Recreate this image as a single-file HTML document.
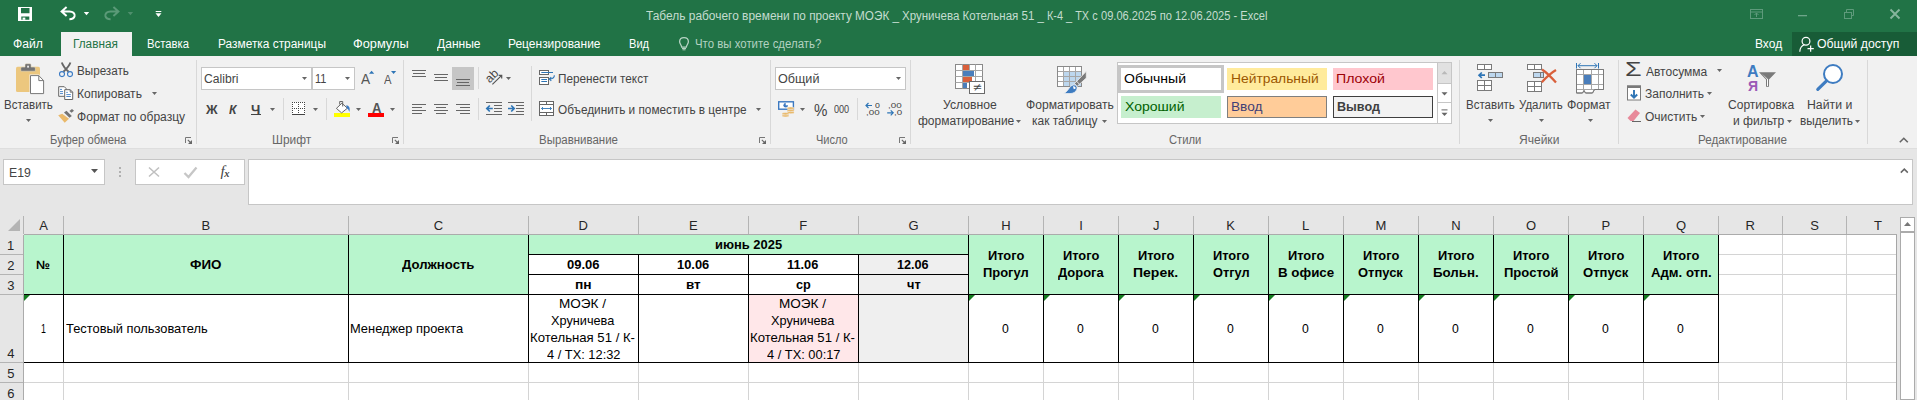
<!DOCTYPE html><html lang="ru"><head><meta charset="utf-8"><title>Excel</title><style>

html,body{margin:0;padding:0;}
body{width:1917px;height:400px;overflow:hidden;position:relative;background:#e6e6e6;font-family:"Liberation Sans",sans-serif;}
.b{position:absolute;box-sizing:border-box;display:block;}
.t{position:absolute;white-space:nowrap;transform-origin:0 50%;display:block;}

</style></head><body>
<div class="b" style="left:0px;top:0px;width:1917px;height:56px;background:#217346;"></div>
<div class="b" style="left:0px;top:56px;width:1917px;height:92px;background:#f1f1f1;"></div>
<div class="b" style="left:0px;top:148px;width:1917px;height:1px;background:#dedede;"></div>
<div class="b" style="left:61px;top:32px;width:71px;height:24px;background:#f1f1f1;"></div>
<div class="b" style="left:1792px;top:32px;width:125px;height:24px;background:#185c37;"></div>
<span class="t" id="t0" style="left:646.45px;top:10.00px;font-size:12px;line-height:12px;color:#c4dccf;transform:scaleX(0.9933);">Табель рабочего времени</span>
<span class="t" id="t1" style="left:793.12px;top:10.00px;font-size:12px;line-height:12px;color:#c4dccf;transform:scaleX(0.9786);">по проекту МОЭК _</span>
<span class="t" id="t2" style="left:902.16px;top:10.00px;font-size:12px;line-height:12px;color:#c4dccf;transform:scaleX(0.9604);">Хруничева Котельная 51 _</span>
<span class="t" id="t3" style="left:1046.84px;top:10.00px;font-size:12px;line-height:12px;color:#c4dccf;transform:scaleX(0.9096);">К-4 _ ТХ с</span>
<span class="t" id="t4" style="left:1100.68px;top:10.00px;font-size:12px;line-height:12px;color:#c4dccf;transform:scaleX(0.9248);">09.06.2025 по 12.06.2025 - Excel</span>
<span class="t" id="t5" style="left:12.62px;top:38.00px;font-size:12.5px;line-height:12.5px;color:#fff;transform:scaleX(0.9730);">Файл</span>
<span class="t" id="t6" style="left:73.36px;top:38.00px;font-size:12.5px;line-height:12.5px;color:#217346;transform:scaleX(0.9419);">Главная</span>
<span class="t" id="t7" style="left:146.70px;top:38.00px;font-size:12.5px;line-height:12.5px;color:#fff;transform:scaleX(0.9031);">Вставка</span>
<span class="t" id="t8" style="left:217.55px;top:38.00px;font-size:12.5px;line-height:12.5px;color:#fff;transform:scaleX(0.9519);">Разметка страницы</span>
<span class="t" id="t9" style="left:353.28px;top:38.00px;font-size:12.5px;line-height:12.5px;color:#fff;transform:scaleX(1.0216);">Формулы</span>
<span class="t" id="t10" style="left:436.95px;top:38.00px;font-size:12.5px;line-height:12.5px;color:#fff;transform:scaleX(0.9650);">Данные</span>
<span class="t" id="t11" style="left:508.04px;top:38.00px;font-size:12.5px;line-height:12.5px;color:#fff;transform:scaleX(0.9582);">Рецензирование</span>
<span class="t" id="t12" style="left:628.91px;top:38.00px;font-size:12.5px;line-height:12.5px;color:#fff;transform:scaleX(0.8870);">Вид</span>
<span class="t" id="t13" style="left:695.33px;top:38.00px;font-size:12.5px;line-height:12.5px;color:#b3d2c1;transform:scaleX(0.9139);">Что вы хотите сделать?</span>
<span class="t" id="t14" style="left:1755.04px;top:38.00px;font-size:12.5px;line-height:12.5px;color:#fff;transform:scaleX(0.9600);">Вход</span>
<span class="t" id="t15" style="left:1817.46px;top:38.00px;font-size:12.5px;line-height:12.5px;color:#fff;transform:scaleX(0.9804);">Общий доступ</span>
<div class="b" style="left:196px;top:60px;width:1px;height:84px;background:#d8d8d8;"></div>
<div class="b" style="left:403px;top:60px;width:1px;height:84px;background:#d8d8d8;"></div>
<div class="b" style="left:770px;top:60px;width:1px;height:84px;background:#d8d8d8;"></div>
<div class="b" style="left:910px;top:60px;width:1px;height:84px;background:#d8d8d8;"></div>
<div class="b" style="left:1459px;top:60px;width:1px;height:84px;background:#d8d8d8;"></div>
<div class="b" style="left:1618px;top:60px;width:1px;height:84px;background:#d8d8d8;"></div>
<div class="b" style="left:1867px;top:60px;width:1px;height:84px;background:#d8d8d8;"></div>
<div class="b" style="left:283px;top:98px;width:1px;height:22px;background:#d8d8d8;"></div>
<div class="b" style="left:326px;top:98px;width:1px;height:22px;background:#d8d8d8;"></div>
<div class="b" style="left:478px;top:98px;width:1px;height:22px;background:#d8d8d8;"></div>
<div class="b" style="left:857px;top:98px;width:1px;height:22px;background:#d8d8d8;"></div>
<div class="b" style="left:478px;top:67px;width:1px;height:22px;background:#d8d8d8;"></div>
<div class="b" style="left:531px;top:66px;width:1px;height:55px;background:#d8d8d8;"></div>
<span class="t" id="t16" style="left:50.11px;top:134.00px;font-size:12px;line-height:12px;color:#666;transform:scaleX(0.9365);">Буфер обмена</span>
<span class="t" id="t17" style="left:272.06px;top:134.00px;font-size:12px;line-height:12px;color:#666;transform:scaleX(0.9913);">Шрифт</span>
<span class="t" id="t18" style="left:538.59px;top:134.00px;font-size:12px;line-height:12px;color:#666;transform:scaleX(0.9553);">Выравнивание</span>
<span class="t" id="t19" style="left:816.17px;top:134.00px;font-size:12px;line-height:12px;color:#666;transform:scaleX(0.9204);">Число</span>
<span class="t" id="t20" style="left:1168.94px;top:134.00px;font-size:12px;line-height:12px;color:#666;transform:scaleX(0.9347);">Стили</span>
<span class="t" id="t21" style="left:1518.95px;top:134.00px;font-size:12px;line-height:12px;color:#666;transform:scaleX(1.0027);">Ячейки</span>
<span class="t" id="t22" style="left:1698.08px;top:134.00px;font-size:12px;line-height:12px;color:#666;transform:scaleX(0.9729);">Редактирование</span>
<span class="t" id="t23" style="left:3.59px;top:99.00px;font-size:12px;line-height:12px;color:#444;transform:scaleX(0.9603);">Вставить</span>
<svg class="b" style="left:26px;top:119px;" width="5" height="3" viewBox="0 0 5 3"><path d="M0 0H5L2.5 3Z" fill="#666"/></svg>
<span class="t" id="t24" style="left:76.58px;top:65.00px;font-size:12px;line-height:12px;color:#444;transform:scaleX(0.9717);">Вырезать</span>
<span class="t" id="t25" style="left:76.55px;top:88.00px;font-size:12px;line-height:12px;color:#444;transform:scaleX(1.0046);">Копировать</span>
<svg class="b" style="left:152px;top:92px;" width="5" height="3" viewBox="0 0 5 3"><path d="M0 0H5L2.5 3Z" fill="#666"/></svg>
<span class="t" id="t26" style="left:76.85px;top:111.00px;font-size:12px;line-height:12px;color:#444;transform:scaleX(1.0051);">Формат по образцу</span>
<div class="b" style="left:201px;top:67px;width:111px;height:23px;background:#fff;border:1px solid #c6c6c6;"></div>
<div class="b" style="left:312px;top:67px;width:43px;height:23px;background:#fff;border:1px solid #c6c6c6;"></div>
<span class="t" id="t27" style="left:203.89px;top:73.00px;font-size:12px;line-height:12px;color:#444;transform:scaleX(1.0110);">Calibri</span>
<svg class="b" style="left:302px;top:77px;" width="5" height="3" viewBox="0 0 5 3"><path d="M0 0H5L2.5 3Z" fill="#666"/></svg>
<span class="t" id="t28" style="left:315.18px;top:73.00px;font-size:12px;line-height:12px;color:#444;transform:scaleX(0.9105);">11</span>
<svg class="b" style="left:345px;top:77px;" width="5" height="3" viewBox="0 0 5 3"><path d="M0 0H5L2.5 3Z" fill="#666"/></svg>
<span class="t" id="t29" style="left:206.20px;top:103.00px;font-size:13px;line-height:13px;color:#444;font-weight:700;transform:scaleX(0.9846);">Ж</span>
<span class="t" id="t30" style="left:229.31px;top:103.00px;font-size:13px;line-height:13px;color:#444;font-weight:700;font-style:italic;transform:scaleX(0.9377);">К</span>
<span class="t" id="t31" style="left:251.13px;top:103.00px;font-size:13px;line-height:13px;color:#444;font-weight:700;transform:scaleX(1.0170);">Ч</span>
<div class="b" style="left:251px;top:114px;width:10px;height:1px;background:#444;"></div>
<svg class="b" style="left:270px;top:108px;" width="5" height="3" viewBox="0 0 5 3"><path d="M0 0H5L2.5 3Z" fill="#666"/></svg>
<svg class="b" style="left:313px;top:108px;" width="5" height="3" viewBox="0 0 5 3"><path d="M0 0H5L2.5 3Z" fill="#666"/></svg>
<svg class="b" style="left:356px;top:108px;" width="5" height="3" viewBox="0 0 5 3"><path d="M0 0H5L2.5 3Z" fill="#666"/></svg>
<svg class="b" style="left:390px;top:108px;" width="5" height="3" viewBox="0 0 5 3"><path d="M0 0H5L2.5 3Z" fill="#666"/></svg>
<div class="b" style="left:452px;top:67px;width:22px;height:23px;background:#c6c6c6;"></div>
<span class="t" id="t32" style="left:557.82px;top:73.00px;font-size:12px;line-height:12px;color:#444;transform:scaleX(0.9781);">Перенести текст</span>
<span class="t" id="t33" style="left:558.21px;top:104.00px;font-size:12px;line-height:12px;color:#444;transform:scaleX(0.9829);">Объединить и поместить в центре</span>
<svg class="b" style="left:756px;top:108px;" width="5" height="3" viewBox="0 0 5 3"><path d="M0 0H5L2.5 3Z" fill="#666"/></svg>
<svg class="b" style="left:506px;top:77px;" width="5" height="3" viewBox="0 0 5 3"><path d="M0 0H5L2.5 3Z" fill="#666"/></svg>
<div class="b" style="left:775px;top:67px;width:131px;height:23px;background:#fff;border:1px solid #c6c6c6;"></div>
<span class="t" id="t34" style="left:778.42px;top:73.00px;font-size:12px;line-height:12px;color:#444;transform:scaleX(1.0490);">Общий</span>
<svg class="b" style="left:896px;top:77px;" width="5" height="3" viewBox="0 0 5 3"><path d="M0 0H5L2.5 3Z" fill="#666"/></svg>
<svg class="b" style="left:800px;top:108px;" width="5" height="3" viewBox="0 0 5 3"><path d="M0 0H5L2.5 3Z" fill="#666"/></svg>
<span class="t" id="t35" style="left:814.03px;top:103.00px;font-size:16px;line-height:16px;color:#444;transform:scaleX(0.9434);">%</span>
<span class="t" id="t36" style="left:834.18px;top:105.00px;font-size:10px;line-height:10px;color:#444;transform:scaleX(0.9078);">000</span>
<span class="t" id="t37" style="left:942.95px;top:99.00px;font-size:12px;line-height:12px;color:#444;transform:scaleX(1.0162);">Условное</span>
<span class="t" id="t38" style="left:917.50px;top:115.00px;font-size:12px;line-height:12px;color:#444;transform:scaleX(0.9992);">форматирование</span>
<svg class="b" style="left:1016px;top:120px;" width="5" height="3" viewBox="0 0 5 3"><path d="M0 0H5L2.5 3Z" fill="#666"/></svg>
<span class="t" id="t39" style="left:1025.59px;top:99.00px;font-size:12px;line-height:12px;color:#444;transform:scaleX(1.0090);">Форматировать</span>
<span class="t" id="t40" style="left:1032.45px;top:115.00px;font-size:12px;line-height:12px;color:#444;transform:scaleX(0.9974);">как таблицу</span>
<svg class="b" style="left:1102px;top:120px;" width="5" height="3" viewBox="0 0 5 3"><path d="M0 0H5L2.5 3Z" fill="#666"/></svg>
<div class="b" style="left:1117px;top:62px;width:335px;height:62px;background:#fff;border:1px solid #c6c6c6;"></div>
<div class="b" style="left:1118px;top:65px;width:106px;height:28px;background:#fff;border:3px solid #c6c6c6;"></div>
<div class="b" style="left:1227px;top:68px;width:100px;height:22px;background:#ffeb9c;"></div>
<div class="b" style="left:1333px;top:68px;width:100px;height:22px;background:#ffc7ce;"></div>
<div class="b" style="left:1121px;top:96px;width:100px;height:22px;background:#c6efce;"></div>
<div class="b" style="left:1227px;top:96px;width:100px;height:22px;background:#ffcc99;border:1px solid #7f7f7f;"></div>
<div class="b" style="left:1333px;top:96px;width:100px;height:22px;background:#f2f2f2;border:1px solid #3f3f3f;"></div>
<span class="t" id="t41" style="left:1124.34px;top:72.00px;font-size:13px;line-height:13px;color:#000;transform:scaleX(1.0787);">Обычный</span>
<span class="t" id="t42" style="left:1230.67px;top:72.00px;font-size:13px;line-height:13px;color:#9c5700;transform:scaleX(1.0631);">Нейтральный</span>
<span class="t" id="t43" style="left:1336.40px;top:72.00px;font-size:13px;line-height:13px;color:#9c0006;transform:scaleX(1.0873);">Плохой</span>
<span class="t" id="t44" style="left:1124.78px;top:100.00px;font-size:13px;line-height:13px;color:#006100;transform:scaleX(1.0793);">Хороший</span>
<span class="t" id="t45" style="left:1230.69px;top:100.00px;font-size:13px;line-height:13px;color:#3f3f76;transform:scaleX(1.0476);">Ввод</span>
<span class="t" id="t46" style="left:1336.71px;top:100.00px;font-size:13px;line-height:13px;color:#3f3f3f;font-weight:700;transform:scaleX(0.9679);">Вывод</span>
<div class="b" style="left:1437px;top:62px;width:15px;height:22px;background:#e1e1e1;border:1px solid #c6c6c6;"></div>
<div class="b" style="left:1437px;top:83px;width:15px;height:20px;background:#fff;border:1px solid #c6c6c6;"></div>
<div class="b" style="left:1437px;top:102px;width:15px;height:22px;background:#fff;border:1px solid #c6c6c6;"></div>
<span class="t" id="t47" style="left:1465.59px;top:99.00px;font-size:12px;line-height:12px;color:#444;transform:scaleX(0.9603);">Вставить</span>
<svg class="b" style="left:1488px;top:119px;" width="5" height="3" viewBox="0 0 5 3"><path d="M0 0H5L2.5 3Z" fill="#666"/></svg>
<span class="t" id="t48" style="left:1519.21px;top:99.00px;font-size:12px;line-height:12px;color:#444;transform:scaleX(0.9542);">Удалить</span>
<svg class="b" style="left:1539px;top:119px;" width="5" height="3" viewBox="0 0 5 3"><path d="M0 0H5L2.5 3Z" fill="#666"/></svg>
<span class="t" id="t49" style="left:1567.33px;top:99.00px;font-size:12px;line-height:12px;color:#444;transform:scaleX(1.0232);">Формат</span>
<svg class="b" style="left:1588px;top:119px;" width="5" height="3" viewBox="0 0 5 3"><path d="M0 0H5L2.5 3Z" fill="#666"/></svg>
<span class="t" id="t50" style="left:1645.50px;top:66.00px;font-size:12px;line-height:12px;color:#444;transform:scaleX(1.0006);">Автосумма</span>
<svg class="b" style="left:1717px;top:69px;" width="5" height="3" viewBox="0 0 5 3"><path d="M0 0H5L2.5 3Z" fill="#666"/></svg>
<span class="t" id="t51" style="left:1645.15px;top:88.00px;font-size:12px;line-height:12px;color:#444;transform:scaleX(1.0024);">Заполнить</span>
<svg class="b" style="left:1707px;top:92px;" width="5" height="3" viewBox="0 0 5 3"><path d="M0 0H5L2.5 3Z" fill="#666"/></svg>
<span class="t" id="t52" style="left:1644.95px;top:111.00px;font-size:12px;line-height:12px;color:#444;transform:scaleX(1.0003);">Очистить</span>
<svg class="b" style="left:1700px;top:115px;" width="5" height="3" viewBox="0 0 5 3"><path d="M0 0H5L2.5 3Z" fill="#666"/></svg>
<span class="t" id="t53" style="left:1728.40px;top:99.00px;font-size:12px;line-height:12px;color:#444;transform:scaleX(1.0033);">Сортировка</span>
<span class="t" id="t54" style="left:1732.95px;top:115.00px;font-size:12px;line-height:12px;color:#444;transform:scaleX(1.0035);">и фильтр</span>
<svg class="b" style="left:1787px;top:120px;" width="5" height="3" viewBox="0 0 5 3"><path d="M0 0H5L2.5 3Z" fill="#666"/></svg>
<span class="t" id="t55" style="left:1807.03px;top:99.00px;font-size:12px;line-height:12px;color:#444;transform:scaleX(1.0229);">Найти и</span>
<span class="t" id="t56" style="left:1799.96px;top:115.00px;font-size:12px;line-height:12px;color:#444;transform:scaleX(0.9861);">выделить</span>
<svg class="b" style="left:1855px;top:120px;" width="5" height="3" viewBox="0 0 5 3"><path d="M0 0H5L2.5 3Z" fill="#666"/></svg>
<div class="b" style="left:3px;top:159px;width:102px;height:26px;background:#fff;border:1px solid #c6c6c6;"></div>
<span class="t" id="t57" style="left:9.33px;top:167.00px;font-size:12px;line-height:12px;color:#444;transform:scaleX(1.0212);">E19</span>
<svg class="b" style="left:91px;top:169px;" width="7" height="4" viewBox="0 0 7 4"><path d="M0 0H7L3.5 4Z" fill="#555"/></svg>
<div class="b" style="left:135px;top:159px;width:110px;height:26px;background:#fff;border:1px solid #c6c6c6;"></div>
<div class="b" style="left:248px;top:159px;width:1665px;height:46px;background:#fff;border:1px solid #c6c6c6;"></div>
<div class="b" style="left:24px;top:235px;width:1873px;height:165px;background:#fff;"></div>
<div class="b" style="left:24px;top:234px;width:1873px;height:1px;background:#ababab;"></div>
<div class="b" style="left:23px;top:235px;width:1px;height:165px;background:#ababab;"></div>
<span class="t" id="t58" style="left:39.13px;top:219.00px;font-size:13px;line-height:13px;color:#262626;transform:scaleX(1.0000);">A</span>
<div class="b" style="left:63px;top:216px;width:1px;height:18px;background:#b4b4b4;"></div>
<span class="t" id="t59" style="left:201.43px;top:219.00px;font-size:13px;line-height:13px;color:#262626;transform:scaleX(1.0000);">B</span>
<div class="b" style="left:348px;top:216px;width:1px;height:18px;background:#b4b4b4;"></div>
<span class="t" id="t60" style="left:433.73px;top:219.00px;font-size:13px;line-height:13px;color:#262626;transform:scaleX(1.0000);">C</span>
<div class="b" style="left:528px;top:216px;width:1px;height:18px;background:#b4b4b4;"></div>
<span class="t" id="t61" style="left:578.52px;top:219.00px;font-size:13px;line-height:13px;color:#262626;transform:scaleX(1.0000);">D</span>
<div class="b" style="left:638px;top:216px;width:1px;height:18px;background:#b4b4b4;"></div>
<span class="t" id="t62" style="left:688.93px;top:219.00px;font-size:13px;line-height:13px;color:#262626;transform:scaleX(1.0000);">E</span>
<div class="b" style="left:748px;top:216px;width:1px;height:18px;background:#b4b4b4;"></div>
<span class="t" id="t63" style="left:799.23px;top:219.00px;font-size:13px;line-height:13px;color:#262626;transform:scaleX(1.0000);">F</span>
<div class="b" style="left:858px;top:216px;width:1px;height:18px;background:#b4b4b4;"></div>
<span class="t" id="t64" style="left:908.62px;top:219.00px;font-size:13px;line-height:13px;color:#262626;transform:scaleX(1.0000);">G</span>
<div class="b" style="left:968px;top:216px;width:1px;height:18px;background:#b4b4b4;"></div>
<span class="t" id="t65" style="left:1001.33px;top:219.00px;font-size:13px;line-height:13px;color:#262626;transform:scaleX(1.0000);">H</span>
<div class="b" style="left:1043px;top:216px;width:1px;height:18px;background:#b4b4b4;"></div>
<span class="t" id="t66" style="left:1079.27px;top:219.00px;font-size:13px;line-height:13px;color:#262626;transform:scaleX(1.0000);">I</span>
<div class="b" style="left:1118px;top:216px;width:1px;height:18px;background:#b4b4b4;"></div>
<span class="t" id="t67" style="left:1153.05px;top:219.00px;font-size:13px;line-height:13px;color:#262626;transform:scaleX(1.0000);">J</span>
<div class="b" style="left:1193px;top:216px;width:1px;height:18px;background:#b4b4b4;"></div>
<span class="t" id="t68" style="left:1226.23px;top:219.00px;font-size:13px;line-height:13px;color:#262626;transform:scaleX(1.0000);">K</span>
<div class="b" style="left:1268px;top:216px;width:1px;height:18px;background:#b4b4b4;"></div>
<span class="t" id="t69" style="left:1302.04px;top:219.00px;font-size:13px;line-height:13px;color:#262626;transform:scaleX(1.0000);">L</span>
<div class="b" style="left:1343px;top:216px;width:1px;height:18px;background:#b4b4b4;"></div>
<span class="t" id="t70" style="left:1375.52px;top:219.00px;font-size:13px;line-height:13px;color:#262626;transform:scaleX(1.0000);">M</span>
<div class="b" style="left:1418px;top:216px;width:1px;height:18px;background:#b4b4b4;"></div>
<span class="t" id="t71" style="left:1451.33px;top:219.00px;font-size:13px;line-height:13px;color:#262626;transform:scaleX(1.0000);">N</span>
<div class="b" style="left:1493px;top:216px;width:1px;height:18px;background:#b4b4b4;"></div>
<span class="t" id="t72" style="left:1525.92px;top:219.00px;font-size:13px;line-height:13px;color:#262626;transform:scaleX(1.0000);">O</span>
<div class="b" style="left:1568px;top:216px;width:1px;height:18px;background:#b4b4b4;"></div>
<span class="t" id="t73" style="left:1601.43px;top:219.00px;font-size:13px;line-height:13px;color:#262626;transform:scaleX(1.0000);">P</span>
<div class="b" style="left:1643px;top:216px;width:1px;height:18px;background:#b4b4b4;"></div>
<span class="t" id="t74" style="left:1675.92px;top:219.00px;font-size:13px;line-height:13px;color:#262626;transform:scaleX(1.0000);">Q</span>
<div class="b" style="left:1718px;top:216px;width:1px;height:18px;background:#b4b4b4;"></div>
<span class="t" id="t75" style="left:1745.52px;top:219.00px;font-size:13px;line-height:13px;color:#262626;transform:scaleX(1.0000);">R</span>
<div class="b" style="left:1782px;top:216px;width:1px;height:18px;background:#b4b4b4;"></div>
<span class="t" id="t76" style="left:1810.23px;top:219.00px;font-size:13px;line-height:13px;color:#262626;transform:scaleX(1.0000);">S</span>
<div class="b" style="left:1846px;top:216px;width:1px;height:18px;background:#b4b4b4;"></div>
<span class="t" id="t77" style="left:1874.04px;top:219.00px;font-size:13px;line-height:13px;color:#262626;transform:scaleX(1.0000);">T</span>
<div class="b" style="left:23px;top:216px;width:1px;height:18px;background:#b4b4b4;"></div>
<svg class="b" style="left:8px;top:219px;" width="13" height="13" viewBox="0 0 13 13"><path d="M12 0V12H0Z" fill="#b4b4b4"/></svg>
<span class="t" id="t78" style="left:7.04px;top:239.00px;font-size:13px;line-height:13px;color:#262626;transform:scaleX(1.0000);">1</span>
<div class="b" style="left:0px;top:254px;width:23px;height:1px;background:#b4b4b4;"></div>
<span class="t" id="t79" style="left:7.14px;top:259.00px;font-size:13px;line-height:13px;color:#262626;transform:scaleX(1.0000);">2</span>
<div class="b" style="left:0px;top:274px;width:23px;height:1px;background:#b4b4b4;"></div>
<span class="t" id="t80" style="left:7.25px;top:279.00px;font-size:13px;line-height:13px;color:#262626;transform:scaleX(1.0000);">3</span>
<div class="b" style="left:0px;top:294px;width:23px;height:1px;background:#b4b4b4;"></div>
<span class="t" id="t81" style="left:7.25px;top:347.00px;font-size:13px;line-height:13px;color:#262626;transform:scaleX(1.0000);">4</span>
<div class="b" style="left:0px;top:362px;width:23px;height:1px;background:#b4b4b4;"></div>
<span class="t" id="t82" style="left:7.25px;top:367.00px;font-size:13px;line-height:13px;color:#262626;transform:scaleX(1.0000);">5</span>
<div class="b" style="left:0px;top:382px;width:23px;height:1px;background:#b4b4b4;"></div>
<span class="t" id="t83" style="left:7.14px;top:387.00px;font-size:13px;line-height:13px;color:#262626;transform:scaleX(1.0000);">6</span>
<div class="b" style="left:0px;top:402px;width:23px;height:1px;background:#b4b4b4;"></div>
<div class="b" style="left:63px;top:235px;width:1px;height:165px;background:#d4d4d4;"></div>
<div class="b" style="left:348px;top:235px;width:1px;height:165px;background:#d4d4d4;"></div>
<div class="b" style="left:528px;top:235px;width:1px;height:165px;background:#d4d4d4;"></div>
<div class="b" style="left:638px;top:235px;width:1px;height:165px;background:#d4d4d4;"></div>
<div class="b" style="left:748px;top:235px;width:1px;height:165px;background:#d4d4d4;"></div>
<div class="b" style="left:858px;top:235px;width:1px;height:165px;background:#d4d4d4;"></div>
<div class="b" style="left:968px;top:235px;width:1px;height:165px;background:#d4d4d4;"></div>
<div class="b" style="left:1043px;top:235px;width:1px;height:165px;background:#d4d4d4;"></div>
<div class="b" style="left:1118px;top:235px;width:1px;height:165px;background:#d4d4d4;"></div>
<div class="b" style="left:1193px;top:235px;width:1px;height:165px;background:#d4d4d4;"></div>
<div class="b" style="left:1268px;top:235px;width:1px;height:165px;background:#d4d4d4;"></div>
<div class="b" style="left:1343px;top:235px;width:1px;height:165px;background:#d4d4d4;"></div>
<div class="b" style="left:1418px;top:235px;width:1px;height:165px;background:#d4d4d4;"></div>
<div class="b" style="left:1493px;top:235px;width:1px;height:165px;background:#d4d4d4;"></div>
<div class="b" style="left:1568px;top:235px;width:1px;height:165px;background:#d4d4d4;"></div>
<div class="b" style="left:1643px;top:235px;width:1px;height:165px;background:#d4d4d4;"></div>
<div class="b" style="left:1718px;top:235px;width:1px;height:165px;background:#d4d4d4;"></div>
<div class="b" style="left:1782px;top:235px;width:1px;height:165px;background:#d4d4d4;"></div>
<div class="b" style="left:1846px;top:235px;width:1px;height:165px;background:#d4d4d4;"></div>
<div class="b" style="left:1896px;top:235px;width:1px;height:165px;background:#d4d4d4;"></div>
<div class="b" style="left:24px;top:254px;width:1873px;height:1px;background:#d4d4d4;"></div>
<div class="b" style="left:24px;top:274px;width:1873px;height:1px;background:#d4d4d4;"></div>
<div class="b" style="left:24px;top:294px;width:1873px;height:1px;background:#d4d4d4;"></div>
<div class="b" style="left:24px;top:362px;width:1873px;height:1px;background:#d4d4d4;"></div>
<div class="b" style="left:24px;top:382px;width:1873px;height:1px;background:#d4d4d4;"></div>
<div class="b" style="left:24px;top:402px;width:1873px;height:1px;background:#d4d4d4;"></div>
<div class="b" style="left:1896px;top:235px;width:1px;height:165px;background:#a6a6a6;"></div>
<div class="b" style="left:24px;top:235px;width:505px;height:59px;background:#b8f5cd;"></div>
<div class="b" style="left:529px;top:235px;width:440px;height:19px;background:#b8f5cd;"></div>
<div class="b" style="left:969px;top:235px;width:750px;height:59px;background:#b8f5cd;"></div>
<div class="b" style="left:529px;top:255px;width:330px;height:39px;background:#fff;"></div>
<div class="b" style="left:859px;top:255px;width:110px;height:39px;background:#efefef;"></div>
<div class="b" style="left:24px;top:295px;width:1695px;height:67px;background:#fff;"></div>
<div class="b" style="left:749px;top:295px;width:110px;height:67px;background:#ffe7e9;"></div>
<div class="b" style="left:859px;top:295px;width:110px;height:67px;background:#efefef;"></div>
<div class="b" style="left:63px;top:235px;width:1px;height:128px;background:#000;"></div>
<div class="b" style="left:348px;top:235px;width:1px;height:128px;background:#000;"></div>
<div class="b" style="left:528px;top:235px;width:1px;height:128px;background:#000;"></div>
<div class="b" style="left:638px;top:235px;width:1px;height:128px;background:#000;"></div>
<div class="b" style="left:748px;top:235px;width:1px;height:128px;background:#000;"></div>
<div class="b" style="left:858px;top:235px;width:1px;height:128px;background:#000;"></div>
<div class="b" style="left:968px;top:235px;width:1px;height:128px;background:#000;"></div>
<div class="b" style="left:1043px;top:235px;width:1px;height:128px;background:#000;"></div>
<div class="b" style="left:1118px;top:235px;width:1px;height:128px;background:#000;"></div>
<div class="b" style="left:1193px;top:235px;width:1px;height:128px;background:#000;"></div>
<div class="b" style="left:1268px;top:235px;width:1px;height:128px;background:#000;"></div>
<div class="b" style="left:1343px;top:235px;width:1px;height:128px;background:#000;"></div>
<div class="b" style="left:1418px;top:235px;width:1px;height:128px;background:#000;"></div>
<div class="b" style="left:1493px;top:235px;width:1px;height:128px;background:#000;"></div>
<div class="b" style="left:1568px;top:235px;width:1px;height:128px;background:#000;"></div>
<div class="b" style="left:1643px;top:235px;width:1px;height:128px;background:#000;"></div>
<div class="b" style="left:1718px;top:235px;width:1px;height:128px;background:#000;"></div>
<div class="b" style="left:24px;top:294px;width:1695px;height:1px;background:#000;"></div>
<div class="b" style="left:24px;top:362px;width:1695px;height:1px;background:#000;"></div>
<div class="b" style="left:529px;top:254px;width:440px;height:1px;background:#000;"></div>
<div class="b" style="left:529px;top:274px;width:440px;height:1px;background:#000;"></div>
<div class="b" style="left:529px;top:235px;width:439px;height:19px;background:#b8f5cd;"></div>
<span class="t" id="t84" style="left:35.96px;top:259.00px;font-size:12px;line-height:12px;color:#000;font-weight:700;transform:scaleX(1.0460);">№</span>
<span class="t" id="t85" style="left:189.85px;top:259.00px;font-size:12px;line-height:12px;color:#000;font-weight:700;transform:scaleX(1.1165);">ФИО</span>
<span class="t" id="t86" style="left:401.79px;top:259.00px;font-size:12px;line-height:12px;color:#000;font-weight:700;transform:scaleX(1.0940);">Должность</span>
<span class="t" id="t87" style="left:715.04px;top:239.00px;font-size:12px;line-height:12px;color:#000;font-weight:700;transform:scaleX(1.0776);">июнь 2025</span>
<span class="t" id="t88" style="left:566.71px;top:259.00px;font-size:12px;line-height:12px;color:#000;font-weight:700;transform:scaleX(1.0838);">09.06</span>
<span class="t" id="t89" style="left:574.78px;top:279.00px;font-size:12px;line-height:12px;color:#000;font-weight:700;transform:scaleX(1.1475);">пн</span>
<span class="t" id="t90" style="left:676.69px;top:259.00px;font-size:12px;line-height:12px;color:#000;font-weight:700;transform:scaleX(1.0743);">10.06</span>
<span class="t" id="t91" style="left:685.70px;top:279.00px;font-size:12px;line-height:12px;color:#000;font-weight:700;transform:scaleX(1.1196);">вт</span>
<span class="t" id="t92" style="left:787.40px;top:259.00px;font-size:12px;line-height:12px;color:#000;font-weight:700;transform:scaleX(1.0676);">11.06</span>
<span class="t" id="t93" style="left:796.23px;top:279.00px;font-size:12px;line-height:12px;color:#000;font-weight:700;transform:scaleX(1.0555);">ср</span>
<span class="t" id="t94" style="left:897.21px;top:259.00px;font-size:12px;line-height:12px;color:#000;font-weight:700;transform:scaleX(1.0535);">12.06</span>
<span class="t" id="t95" style="left:906.62px;top:279.00px;font-size:12px;line-height:12px;color:#000;font-weight:700;transform:scaleX(1.0608);">чт</span>
<span class="t" id="t96" style="left:988.00px;top:250.00px;font-size:12px;line-height:12px;color:#000;font-weight:700;transform:scaleX(1.0715);">Итого</span>
<span class="t" id="t97" style="left:982.54px;top:267.00px;font-size:12px;line-height:12px;color:#000;font-weight:700;transform:scaleX(1.0785);">Прогул</span>
<span class="t" id="t98" style="left:1002.17px;top:322.00px;font-size:13px;line-height:13px;color:#000;transform:scaleX(0.9385);">0</span>
<svg class="b" style="left:969px;top:295px;" width="6" height="6" viewBox="0 0 6 6"><path d="M0 0H6L0 6Z" fill="#137c1f"/></svg>
<span class="t" id="t99" style="left:1063.00px;top:250.00px;font-size:12px;line-height:12px;color:#000;font-weight:700;transform:scaleX(1.0715);">Итого</span>
<span class="t" id="t100" style="left:1057.89px;top:267.00px;font-size:12px;line-height:12px;color:#000;font-weight:700;transform:scaleX(1.0772);">Дорога</span>
<span class="t" id="t101" style="left:1077.17px;top:322.00px;font-size:13px;line-height:13px;color:#000;transform:scaleX(0.9385);">0</span>
<svg class="b" style="left:1044px;top:295px;" width="6" height="6" viewBox="0 0 6 6"><path d="M0 0H6L0 6Z" fill="#137c1f"/></svg>
<span class="t" id="t102" style="left:1138.00px;top:250.00px;font-size:12px;line-height:12px;color:#000;font-weight:700;transform:scaleX(1.0715);">Итого</span>
<span class="t" id="t103" style="left:1133.27px;top:267.00px;font-size:12px;line-height:12px;color:#000;font-weight:700;transform:scaleX(1.1657);">Перек.</span>
<span class="t" id="t104" style="left:1152.17px;top:322.00px;font-size:13px;line-height:13px;color:#000;transform:scaleX(0.9385);">0</span>
<svg class="b" style="left:1119px;top:295px;" width="6" height="6" viewBox="0 0 6 6"><path d="M0 0H6L0 6Z" fill="#137c1f"/></svg>
<span class="t" id="t105" style="left:1213.00px;top:250.00px;font-size:12px;line-height:12px;color:#000;font-weight:700;transform:scaleX(1.0715);">Итого</span>
<span class="t" id="t106" style="left:1212.62px;top:267.00px;font-size:12px;line-height:12px;color:#000;font-weight:700;transform:scaleX(1.0673);">Отгул</span>
<span class="t" id="t107" style="left:1227.17px;top:322.00px;font-size:13px;line-height:13px;color:#000;transform:scaleX(0.9385);">0</span>
<svg class="b" style="left:1194px;top:295px;" width="6" height="6" viewBox="0 0 6 6"><path d="M0 0H6L0 6Z" fill="#137c1f"/></svg>
<span class="t" id="t108" style="left:1288.00px;top:250.00px;font-size:12px;line-height:12px;color:#000;font-weight:700;transform:scaleX(1.0715);">Итого</span>
<span class="t" id="t109" style="left:1277.71px;top:267.00px;font-size:12px;line-height:12px;color:#000;font-weight:700;transform:scaleX(1.1118);">В офисе</span>
<span class="t" id="t110" style="left:1302.17px;top:322.00px;font-size:13px;line-height:13px;color:#000;transform:scaleX(0.9385);">0</span>
<svg class="b" style="left:1269px;top:295px;" width="6" height="6" viewBox="0 0 6 6"><path d="M0 0H6L0 6Z" fill="#137c1f"/></svg>
<span class="t" id="t111" style="left:1363.00px;top:250.00px;font-size:12px;line-height:12px;color:#000;font-weight:700;transform:scaleX(1.0715);">Итого</span>
<span class="t" id="t112" style="left:1357.91px;top:267.00px;font-size:12px;line-height:12px;color:#000;font-weight:700;transform:scaleX(1.0801);">Отпуск</span>
<span class="t" id="t113" style="left:1377.17px;top:322.00px;font-size:13px;line-height:13px;color:#000;transform:scaleX(0.9385);">0</span>
<svg class="b" style="left:1344px;top:295px;" width="6" height="6" viewBox="0 0 6 6"><path d="M0 0H6L0 6Z" fill="#137c1f"/></svg>
<span class="t" id="t114" style="left:1438.00px;top:250.00px;font-size:12px;line-height:12px;color:#000;font-weight:700;transform:scaleX(1.0715);">Итого</span>
<span class="t" id="t115" style="left:1432.61px;top:267.00px;font-size:12px;line-height:12px;color:#000;font-weight:700;transform:scaleX(1.1096);">Больн.</span>
<span class="t" id="t116" style="left:1452.17px;top:322.00px;font-size:13px;line-height:13px;color:#000;transform:scaleX(0.9385);">0</span>
<svg class="b" style="left:1419px;top:295px;" width="6" height="6" viewBox="0 0 6 6"><path d="M0 0H6L0 6Z" fill="#137c1f"/></svg>
<span class="t" id="t117" style="left:1513.00px;top:250.00px;font-size:12px;line-height:12px;color:#000;font-weight:700;transform:scaleX(1.0715);">Итого</span>
<span class="t" id="t118" style="left:1503.53px;top:267.00px;font-size:12px;line-height:12px;color:#000;font-weight:700;transform:scaleX(1.0864);">Простой</span>
<span class="t" id="t119" style="left:1527.17px;top:322.00px;font-size:13px;line-height:13px;color:#000;transform:scaleX(0.9385);">0</span>
<svg class="b" style="left:1494px;top:295px;" width="6" height="6" viewBox="0 0 6 6"><path d="M0 0H6L0 6Z" fill="#137c1f"/></svg>
<span class="t" id="t120" style="left:1588.00px;top:250.00px;font-size:12px;line-height:12px;color:#000;font-weight:700;transform:scaleX(1.0715);">Итого</span>
<span class="t" id="t121" style="left:1582.81px;top:267.00px;font-size:12px;line-height:12px;color:#000;font-weight:700;transform:scaleX(1.0922);">Отпуск</span>
<span class="t" id="t122" style="left:1602.17px;top:322.00px;font-size:13px;line-height:13px;color:#000;transform:scaleX(0.9385);">0</span>
<svg class="b" style="left:1569px;top:295px;" width="6" height="6" viewBox="0 0 6 6"><path d="M0 0H6L0 6Z" fill="#137c1f"/></svg>
<span class="t" id="t123" style="left:1663.00px;top:250.00px;font-size:12px;line-height:12px;color:#000;font-weight:700;transform:scaleX(1.0715);">Итого</span>
<span class="t" id="t124" style="left:1650.83px;top:267.00px;font-size:12px;line-height:12px;color:#000;font-weight:700;transform:scaleX(1.0961);">Адм. отп.</span>
<span class="t" id="t125" style="left:1677.17px;top:322.00px;font-size:13px;line-height:13px;color:#000;transform:scaleX(0.9385);">0</span>
<svg class="b" style="left:1644px;top:295px;" width="6" height="6" viewBox="0 0 6 6"><path d="M0 0H6L0 6Z" fill="#137c1f"/></svg>
<svg class="b" style="left:24px;top:295px;" width="6" height="6" viewBox="0 0 6 6"><path d="M0 0H6L0 6Z" fill="#137c1f"/></svg>
<span class="t" id="t126" style="left:40.75px;top:322.00px;font-size:13px;line-height:13px;color:#000;transform:scaleX(0.6790);">1</span>
<span class="t" id="t127" style="left:65.80px;top:322.00px;font-size:13px;line-height:13px;color:#000;transform:scaleX(0.9896);">Тестовый пользователь</span>
<span class="t" id="t128" style="left:350.49px;top:322.00px;font-size:13px;line-height:13px;color:#000;transform:scaleX(0.9899);">Менеджер проекта</span>
<span class="t" id="t129" style="left:559.14px;top:297.00px;font-size:13px;line-height:13px;color:#000;transform:scaleX(1.0429);">МОЭК /</span>
<span class="t" id="t130" style="left:551.40px;top:314.00px;font-size:13px;line-height:13px;color:#000;transform:scaleX(0.9788);">Хруничева</span>
<span class="t" id="t131" style="left:530.42px;top:331.00px;font-size:13px;line-height:13px;color:#000;transform:scaleX(1.0122);">Котельная 51 / К-</span>
<span class="t" id="t132" style="left:546.62px;top:348.00px;font-size:13px;line-height:13px;color:#000;transform:scaleX(0.9871);">4 / ТХ: 12:32</span>
<span class="t" id="t133" style="left:779.14px;top:297.00px;font-size:13px;line-height:13px;color:#000;transform:scaleX(1.0429);">МОЭК /</span>
<span class="t" id="t134" style="left:771.40px;top:314.00px;font-size:13px;line-height:13px;color:#000;transform:scaleX(0.9788);">Хруничева</span>
<span class="t" id="t135" style="left:750.42px;top:331.00px;font-size:13px;line-height:13px;color:#000;transform:scaleX(1.0122);">Котельная 51 / К-</span>
<span class="t" id="t136" style="left:766.62px;top:348.00px;font-size:13px;line-height:13px;color:#000;transform:scaleX(0.9871);">4 / ТХ: 00:17</span>
<div class="b" style="left:1900px;top:217px;width:15px;height:15px;background:#fff;border:1px solid #ababab;"></div>
<div class="b" style="left:1900px;top:232px;width:15px;height:168px;background:#fff;border:1px solid #ababab;"></div>
<svg class="b" style="left:1904px;top:222px;" width="7" height="4" viewBox="0 0 7 4"><path d="M0 4L3.5 0L7 4Z" fill="#777"/></svg>
<svg class="b" style="left:10px;top:2px" width="170" height="26" viewBox="10 2 170 26">
<path d="M18 7H32V21H18Z M21 8V13.3H29.5V8Z M21.3 16.4V19.7H29.3V16.4Z" fill="#fff" fill-rule="evenodd"/>
<rect x="22.6" y="17.6" width="2.7" height="2.2" fill="#fff"/>
<path d="M66.6 7L61.6 11.4L66.6 16 M62 11.4H69.5C73 11.4 75 13.6 74.6 16C74.2 18 72.3 19.3 69.4 19.3" fill="none" stroke="#fff" stroke-width="2"/>
<path d="M83.8 12H89.2L86.5 15.2Z" fill="#fff"/>
<path d="M113.4 7L118.4 11.4L113.4 16 M118 11.4H110.5C107 11.4 105 13.6 105.4 16C105.8 18 107.7 19.3 110.6 19.3" fill="none" stroke="#5b9a78" stroke-width="2"/>
<path d="M127.7 12H133.1L130.4 15.2Z" fill="#4f8f6d"/>
<rect x="155.7" y="11" width="5.6" height="1" fill="#fff"/>
<path d="M155.5 13.2H161.5L158.5 17Z" fill="#fff"/>
</svg>
<svg class="b" style="left:1745px;top:5px" width="160" height="20" viewBox="1745 5 160 20">
<g fill="none" stroke="#5e9a7b" stroke-width="1">
<rect x="1750.5" y="9.5" width="12" height="9"/>
<path d="M1750.5 12H1762.5" />
<path d="M1756.5 17V13 M1754.5 15L1756.5 13L1758.5 15"/>
</g>
<rect x="1798" y="15" width="9" height="1.3" fill="#6ea58a"/>
<g fill="none" stroke="#5e9a7b" stroke-width="1">
<rect x="1844.500" y="12.5" width="7" height="6"/>
<path d="M1846.5 12.5V9.500H1853.500V15.500H1851.5"/>
</g>
<path d="M1890.5 9.500L1899.5 18.500M1899.5 9.500L1890.5 18.500" stroke="#86b59c" stroke-width="1.9"/>
</svg>
<svg class="b" style="left:676px;top:35px" width="16" height="18" viewBox="676 35 16 18">
<path d="M684 37.700C686.700 37.700 688.400 39.600 688.400 41.800C688.400 43.800 686.600 45 686.300 47.200H681.700C681.400 45 679.600 43.800 679.600 41.800C679.600 39.600 681.300 37.700 684 37.700Z" fill="none" stroke="#b7d3c4" stroke-width="1.300"/>
<path d="M682 48.500H686M682.500 49.800H685.500" stroke="#b7d3c4" stroke-width="1"/>
</svg>
<svg class="b" style="left:1797px;top:34px" width="20" height="20" viewBox="1797 34 20 20">
<circle cx="1806" cy="41.200" r="3.900" fill="none" stroke="#fff" stroke-width="1.200"/>
<path d="M1799.800 51.700C1800 48 1802 45.600 1804.300 44.800" fill="none" stroke="#fff" stroke-width="1.200"/>
<path d="M1807.500 48.700H1813.800M1810.650 45.600V51.800" stroke="#fff" stroke-width="1.200"/>
</svg>
<svg class="b" style="left:12px;top:60px" width="36" height="36" viewBox="12 60 36 36">
<rect x="16" y="66.800" width="24" height="25.200" rx="1.600" fill="#ecc77e"/>
<path d="M20.800 71.200V68.200Q20.800 67.100 21.900 67.100H25V64.800Q25 63.700 26.100 63.700H30Q31.100 63.700 31.100 64.800V67.100H34.200Q35.300 67.100 35.300 68.200V71.200Z" fill="#737373" stroke="#f1e4c8" stroke-width="0.500"/>
<rect x="27.200" y="65.700" width="1.700" height="1.900" fill="#f7f7f7"/>
<path d="M29.500 74.600H39.200L44.600 80.200V94.600H29.500Z" fill="#f1f1f1"/>
<path d="M30.500 75.600H38.800L43.600 80.600V93.600H30.500Z" fill="#fff" stroke="#787878" stroke-width="1"/>
<path d="M38.800 75.600V80.600H43.600" fill="none" stroke="#787878" stroke-width="1"/>
</svg>
<svg class="b" style="left:56px;top:60px" width="20" height="20" viewBox="56 60 20 20">
<path d="M61.800 62.500C62.800 65.500 65 68.500 68.600 71.700 M70.400 62.500C69.400 65.500 67 68.500 63.400 71.700" fill="none" stroke="#666" stroke-width="1.900"/>
<circle cx="62" cy="74.100" r="2.500" fill="none" stroke="#3b7bc4" stroke-width="1.100"/>
<circle cx="70" cy="74.100" r="2.500" fill="none" stroke="#3b7bc4" stroke-width="1.100"/>
</svg>
<svg class="b" style="left:56px;top:84px" width="20" height="18" viewBox="56 84 20 18">
<path d="M58.700 86.700H64.300L66 88.400V96.300H58.700Z" fill="#fff" stroke="#666" stroke-width="1"/>
<path d="M60 89.400H62M60 91.600H63M60 93.600H63" stroke="#3b7bc4" stroke-width="0.900"/>
<path d="M64.700 89.700H70.200L72.700 92.200V99.500H64.700Z" fill="#fff" stroke="#666" stroke-width="1"/>
<path d="M70.200 89.700V92.200H72.700" fill="none" stroke="#666" stroke-width="0.900"/>
<path d="M66.300 92.400H67.800M66.300 94.600H70.800M66.300 96.500H70.800" stroke="#3b7bc4" stroke-width="0.900"/>
</svg>
<svg class="b" style="left:56px;top:107px" width="20" height="18" viewBox="56 107 20 18">
<path d="M58.200 115.200L62.200 113.700L69 118.800L64.700 122.800Z" fill="#eab96a"/>
<path d="M64 112.500L66.500 110.700L71.800 116L69.500 117.800Z" fill="#737373"/>
<path d="M69.400 111L72 109L74 110.800L71.500 112.800Z" fill="#737373"/>
</svg>
<span class="t" id="t137" style="left:361.40px;top:72.00px;font-size:14.5px;line-height:14.5px;color:#555;transform:scaleX(0.9443);">A</span>
<span class="t" id="t138" style="left:384.30px;top:74.00px;font-size:12px;line-height:12px;color:#555;transform:scaleX(0.9375);">A</span>
<svg class="b" style="left:368px;top:70px" width="30" height="5" viewBox="368 70 30 5">
<path d="M369 73.800L371.600 70.800L374.200 73.800Z" fill="#2e75b6"/>
<path d="M391 70.900H396.200L393.600 73.900Z" fill="#2e75b6"/>
</svg>
<div class="b" style="left:412px;top:70px;width:14px;height:1px;background:#666;"></div>
<div class="b" style="left:413px;top:73px;width:12px;height:1px;background:#666;"></div>
<div class="b" style="left:412px;top:76px;width:14px;height:1px;background:#666;"></div>
<div class="b" style="left:434px;top:74px;width:14px;height:1px;background:#666;"></div>
<div class="b" style="left:435px;top:77px;width:12px;height:1px;background:#666;"></div>
<div class="b" style="left:434px;top:80px;width:14px;height:1px;background:#666;"></div>
<div class="b" style="left:456px;top:79px;width:14px;height:1px;background:#666;"></div>
<div class="b" style="left:457px;top:82px;width:12px;height:1px;background:#666;"></div>
<div class="b" style="left:456px;top:85px;width:14px;height:1px;background:#666;"></div>
<div class="b" style="left:412px;top:104px;width:14px;height:1px;background:#666;"></div>
<div class="b" style="left:412px;top:107px;width:10px;height:1px;background:#666;"></div>
<div class="b" style="left:412px;top:110px;width:14px;height:1px;background:#666;"></div>
<div class="b" style="left:412px;top:113px;width:10px;height:1px;background:#666;"></div>
<div class="b" style="left:434px;top:104px;width:14px;height:1px;background:#666;"></div>
<div class="b" style="left:436px;top:107px;width:10px;height:1px;background:#666;"></div>
<div class="b" style="left:434px;top:110px;width:14px;height:1px;background:#666;"></div>
<div class="b" style="left:436px;top:113px;width:10px;height:1px;background:#666;"></div>
<div class="b" style="left:456px;top:104px;width:14px;height:1px;background:#666;"></div>
<div class="b" style="left:460px;top:107px;width:10px;height:1px;background:#666;"></div>
<div class="b" style="left:456px;top:110px;width:14px;height:1px;background:#666;"></div>
<div class="b" style="left:460px;top:113px;width:10px;height:1px;background:#666;"></div>
<span class="t" style="left:485px;top:70px;font-size:12px;line-height:12px;color:#444;transform:rotate(-45deg);transform-origin:50% 50%;">ab</span>
<svg class="b" style="left:484px;top:68px" width="20" height="18" viewBox="484 68 20 18">
<path d="M492.400 84.400L501.400 75.600M498.700 75.400H501.700V78.400" fill="none" stroke="#555" stroke-width="1.200"/>
</svg>
<div class="b" style="left:486px;top:102px;width:16px;height:1px;background:#666;"></div>
<div class="b" style="left:494px;top:105px;width:8px;height:1px;background:#666;"></div>
<div class="b" style="left:494px;top:108px;width:8px;height:1px;background:#666;"></div>
<div class="b" style="left:494px;top:111px;width:8px;height:1px;background:#666;"></div>
<div class="b" style="left:486px;top:114px;width:16px;height:1px;background:#666;"></div>
<div class="b" style="left:508px;top:102px;width:16px;height:1px;background:#666;"></div>
<div class="b" style="left:516px;top:105px;width:8px;height:1px;background:#666;"></div>
<div class="b" style="left:516px;top:108px;width:8px;height:1px;background:#666;"></div>
<div class="b" style="left:516px;top:111px;width:8px;height:1px;background:#666;"></div>
<div class="b" style="left:508px;top:114px;width:16px;height:1px;background:#666;"></div>
<svg class="b" style="left:485px;top:104px" width="32" height="9" viewBox="485 104 32 9">
<path d="M492.800 108.500H487.500M489.800 105.500L486.800 108.500L489.800 111.500" fill="none" stroke="#2e75b6" stroke-width="1.700"/>
<path d="M508 108.500H513.500M511.200 105.500L514.200 108.500L511.200 111.500" fill="none" stroke="#2e75b6" stroke-width="1.700"/>
</svg>
<svg class="b" style="left:538px;top:69px" width="18" height="17" viewBox="538 69 18 17">
<rect x="539.500" y="70.500" width="9" height="4" fill="#fff" stroke="#666"/>
<rect x="539.500" y="77.500" width="9" height="7" fill="#fff" stroke="#666"/>
<path d="M541.300 72.500H553M541.300 79.500H547M541.300 81.500H547" stroke="#2e75b6" stroke-width="1"/>
<path d="M554.300 75.300C554.600 77.600 552.500 79 549.500 79M551.300 77.200L549.300 79L551.300 80.800" fill="none" stroke="#2e75b6" stroke-width="1.100"/>
</svg>
<svg class="b" style="left:538px;top:100px" width="17" height="17" viewBox="538 100 17 17">
<rect x="539.500" y="101.500" width="14" height="14" fill="#fff" stroke="#666"/>
<path d="M539.500 104.500H553.500M539.500 112.500H553.500M546.500 101.500V104.500M546.500 112.500V115.500" stroke="#666"/>
<path d="M541.500 108.500H551.500M543 107L541.500 108.500L543 110M550 107L551.500 108.500L550 110" fill="none" stroke="#2e75b6" stroke-width="0.900"/>
</svg>
<svg class="b" style="left:291px;top:101px" width="16" height="15" viewBox="291 101 16 15">
<rect x="292" y="102" width="13" height="12" fill="#fff"/>
<path d="M292 102.500H305M292 108.500H305" stroke="#444" stroke-width="1" stroke-dasharray="1 1"/>
<path d="M292.500 102V114M298.500 102V114M304.500 102V114" stroke="#444" stroke-width="1" stroke-dasharray="1 1"/>
<path d="M292 114.500H305" stroke="#444" stroke-width="1"/>
</svg>
<div class="b" style="left:334px;top:113px;width:16px;height:4px;background:#ffff00;"></div>
<div class="b" style="left:368px;top:113px;width:16px;height:4px;background:#ff0000;"></div>
<svg class="b" style="left:334px;top:100px" width="18" height="14" viewBox="334 100 18 14">
<path d="M336.400 108.400L341.900 103.200L347.400 108.200L341.600 112.900Z" fill="#fff" stroke="#666" stroke-width="1"/>
<path d="M339.700 104.500V101.500H342.700V106.500" fill="none" stroke="#666" stroke-width="1"/>
<path d="M346.200 105.200C349 105.400 350.600 108 349.300 112C348.700 110 348 108.800 346.800 108.200Z" fill="#3b7bc4"/>
</svg>
<span class="t" id="t139" style="left:371.70px;top:101.00px;font-size:14px;line-height:14px;color:#555;font-weight:700;transform:scaleX(0.9351);">A</span>
<svg class="b" style="left:777px;top:100px" width="18" height="18" viewBox="777 100 18 18">
<rect x="778.700" y="101.800" width="14.700" height="7.400" fill="#fff" stroke="#3b78c0" stroke-width="1.400"/>
<circle cx="785.700" cy="105.300" r="2.300" fill="#3b78c0"/>
<path d="M785.700 105.300H788.500V103H785.700Z" fill="#fff"/>
<g fill="#e9b96b" stroke="#f1f1f1" stroke-width="0.500">
<ellipse cx="790.600" cy="112.400" rx="3.600" ry="1.300"/>
<ellipse cx="790.600" cy="110.300" rx="3.600" ry="1.300"/>
<ellipse cx="790.600" cy="108.200" rx="3.600" ry="1.300"/>
<ellipse cx="785.500" cy="115.800" rx="3.500" ry="1.200"/>
<ellipse cx="785.500" cy="113.700" rx="3.500" ry="1.200"/>
</g>
</svg>
<span class="t" id="t140" style="left:874.77px;top:102.00px;font-size:8px;line-height:8px;color:#333;transform:scaleX(1.0909);">0</span>
<span class="t" id="t141" style="left:866.04px;top:109.00px;font-size:8px;line-height:8px;color:#444;transform:scaleX(1.2251);">,00</span>
<span class="t" id="t142" style="left:888.14px;top:102.00px;font-size:8px;line-height:8px;color:#444;transform:scaleX(1.2251);">,00</span>
<span class="t" id="t143" style="left:893.65px;top:109.00px;font-size:8px;line-height:8px;color:#444;transform:scaleX(1.2164);">,0</span>
<svg class="b" style="left:864px;top:102px" width="32" height="15" viewBox="864 102 32 15">
<path d="M872 105.500H866M868.500 103L866 105.500L868.500 108" fill="none" stroke="#2e75b6" stroke-width="1.200"/>
<path d="M887.200 112.800H893.200M890.700 110.300L893.200 112.800L890.700 115.300" fill="none" stroke="#2e75b6" stroke-width="1.200"/>
</svg>
<svg class="b" style="left:954px;top:63px" width="33" height="32" viewBox="954 63 33 32">
<rect x="955.500" y="64.500" width="27" height="24" fill="#fff" stroke="#8a8a8a"/>
<path d="M962.500 64.500V88.500M969.500 64.500V88.500M975.500 64.500V88.500M955.500 70.500H982.500M955.500 76.500H982.500M955.500 82.500H982.500" stroke="#a6a6a6"/>
<rect x="963" y="65" width="6" height="5" fill="#d9603b"/>
<rect x="963" y="71" width="11" height="5" fill="#4a7ebb"/>
<rect x="963" y="77" width="9" height="5" fill="#d9603b"/>
<rect x="963" y="83" width="4" height="5" fill="#4a7ebb"/>
<rect x="969.500" y="81.500" width="15" height="12" fill="#fff" stroke="#6a6a6a"/>
</svg>
<span class="t" id="t144" style="left:972.89px;top:82.00px;font-size:11px;line-height:11px;color:#444;transform:scaleX(1.3704);">≠</span>
<svg class="b" style="left:1056px;top:65px" width="32" height="30" viewBox="1056 65 32 30">
<rect x="1057.500" y="66.500" width="24" height="20" fill="#fff" stroke="#8a8a8a"/>
<rect x="1064" y="72" width="17" height="14" fill="#bdd7ee"/>
<path d="M1063.500 66.500V86.500M1069.500 66.500V86.500M1075.500 66.500V86.500M1057.500 71.500H1081.500M1057.500 76.500H1081.500M1057.500 81.500H1081.500" stroke="#a6a6a6"/>
<rect x="1057.500" y="66.500" width="24" height="20" fill="none" stroke="#8a8a8a"/>
<path d="M1086.300 71.300V78L1077.200 86.300L1074.600 83.500Z" fill="#7a7a7a" stroke="#f1f1f1" stroke-width="0.800"/>
<path d="M1076.200 80.800L1079.500 84.300" stroke="#f1f1f1" stroke-width="0.900"/>
<path d="M1073.600 84.900C1076 84.600 1077.600 86.600 1077 89C1076.200 92 1073 93.600 1070 93.600H1063.700C1067.500 91.500 1068.500 88.500 1070.500 86.500C1071.500 85.500 1072.500 85 1073.600 84.900Z" fill="#3e7cc1" stroke="#f1f1f1" stroke-width="0.800"/>
<path d="M1073 86.400C1074.600 86 1075.800 87 1075.600 88.600L1073.800 89.200Z" fill="#fff"/>
</svg>
<svg class="b" style="left:1440px;top:70px" width="10" height="48" viewBox="1440 70 10 48">
<path d="M1441.500 74.200L1444.500 71L1447.500 74.200Z" fill="#b9b9b9"/>
<path d="M1441.500 92.200H1447.500L1444.500 95.500Z" fill="#666"/>
<rect x="1441.500" y="109.400" width="6" height="1" fill="#666"/>
<path d="M1441.500 112.800H1447.500L1444.500 116.100Z" fill="#666"/>
</svg>
<svg class="b" style="left:1475px;top:62px" width="30" height="31" viewBox="1475 62 30 31">
<rect x="1477.500" y="64.500" width="14" height="5" fill="#fff" stroke="#7a7a7a"/>
<path d="M1484.500 64.500V69.500" stroke="#7a7a7a"/>
<rect x="1488.500" y="72.500" width="14" height="5" fill="#bdd7ee" stroke="#7a7a7a"/>
<path d="M1495.500 72.500V77.500" stroke="#7a7a7a"/>
<rect x="1477.500" y="80.500" width="14" height="10" fill="#fff" stroke="#7a7a7a"/>
<path d="M1484.500 80.500V90.500M1477.500 85.500H1491.500" stroke="#7a7a7a"/>
<path d="M1485 75.200H1479.500M1481.800 72.500L1479 75.200L1481.800 78" fill="none" stroke="#2e75b6" stroke-width="1.700"/>
</svg>
<svg class="b" style="left:1525px;top:62px" width="33" height="31" viewBox="1525 62 33 31">
<rect x="1527.500" y="64.500" width="14" height="5" fill="#fff" stroke="#7a7a7a"/>
<path d="M1534.500 64.500V69.500" stroke="#7a7a7a"/>
<rect x="1533.500" y="72.500" width="10" height="5" fill="#bdd7ee" stroke="#7a7a7a"/>
<path d="M1540.500 72.500V77.500" stroke="#7a7a7a"/>
<rect x="1527.500" y="81.500" width="14" height="10" fill="#fff" stroke="#7a7a7a"/>
<path d="M1534.500 81.500V91.500M1527.500 86.500H1541.500" stroke="#7a7a7a"/>
<path d="M1542 69.500C1546 72 1551 77 1556 82.500M1556 70C1550 73.500 1546 77.500 1541.800 82.200" fill="none" stroke="#d9603b" stroke-width="2.300"/>
</svg>
<svg class="b" style="left:1574px;top:61px" width="32" height="34" viewBox="1574 61 32 34">
<path d="M1576.500 63V68.500M1598.500 63V68.500M1578 65.700H1597M1580.500 63.200L1578 65.700L1580.500 68.200M1594.500 63.200L1597 65.700L1594.500 68.200" fill="none" stroke="#2e75b6" stroke-width="1"/>
<path d="M1576.500 69.500H1603.500V89.500H1594.500L1592.500 93H1585.500L1584 90.500L1582.500 93H1576.500Z" fill="#fff" stroke="#7a7a7a"/>
<path d="M1583.500 69.500V89.500M1591.500 69.500V89.500M1598.500 69.500V89.500M1576.500 74.500H1603.500M1576.500 84.500H1603.500M1576.500 89.500H1603.500" stroke="#a6a6a6"/>
<rect x="1584" y="75" width="7" height="9" fill="#4a7ebb"/>
<path d="M1576.500 69.500H1603.500V89.500H1594.500L1592.500 93H1585.500L1584 90.500L1582.500 93H1576.500Z" fill="none" stroke="#7a7a7a"/>
</svg>
<span class="t" id="t145" style="left:1625.04px;top:60.00px;font-size:19.5px;line-height:19.5px;color:#444;transform:scaleX(1.3785);">Σ</span>
<svg class="b" style="left:1626px;top:84px" width="17" height="18" viewBox="1626 84 17 18">
<rect x="1627.500" y="86" width="13" height="14" fill="#fff" stroke="#7a7a7a"/>
<rect x="1627" y="85.500" width="14" height="2.500" fill="#7a7a7a"/>
<path d="M1634 90V97.500M1630.800 94.500L1634 97.700L1637.200 94.500" fill="none" stroke="#2e75b6" stroke-width="1.900"/>
</svg>
<svg class="b" style="left:1626px;top:108px" width="17" height="15" viewBox="1626 108 17 15">
<path d="M1627.500 118L1635.500 109.500L1640 113L1633.500 121H1630.500Z" fill="#e8899a"/>
<path d="M1632 121.500H1641" stroke="#666" stroke-width="1"/>
</svg>
<span class="t" id="t146" style="left:1746.75px;top:63.00px;font-size:16.5px;line-height:16.5px;color:#3e7cc1;font-weight:700;transform:scaleX(0.9697);">А</span>
<span class="t" id="t147" style="left:1747.78px;top:78.00px;font-size:15px;line-height:15px;color:#9b59b6;font-weight:700;transform:scaleX(0.9366);">Я</span>
<svg class="b" style="left:1758px;top:70px" width="20" height="19" viewBox="1758 70 20 19">
<path d="M1759 72.200H1776L1769 79.500V86.800H1766V79.500Z" fill="#7a7a7a"/>
<path d="M1761.500 73.300L1767 79.200V86H1768V79.200Z" fill="#fff"/>
</svg>
<svg class="b" style="left:1815px;top:62px" width="30" height="31" viewBox="1815 62 30 31">
<circle cx="1833" cy="74" r="9" fill="#fff" stroke="#3e7cc1" stroke-width="2"/>
<path d="M1826.500 80.800L1817.800 89.300" stroke="#3e7cc1" stroke-width="3.200" stroke-linecap="round"/>
</svg>
<svg class="b" style="left:1898px;top:135px" width="12" height="10" viewBox="1898 135 12 10"><path d="M1899.800 142.300L1903.800 138.300L1907.800 142.300" fill="none" stroke="#666" stroke-width="1.600"/></svg>
<svg class="b" style="left:185px;top:136px" width="9" height="9" viewBox="185 136 9 9"><path d="M185.5 143V137.500H191" fill="none" stroke="#777" stroke-width="1"/><path d="M192 140V144H188Z" fill="#666"/><path d="M187.8 139.800L191 143" stroke="#666" stroke-width="1.100"/></svg>
<svg class="b" style="left:392px;top:136px" width="9" height="9" viewBox="392 136 9 9"><path d="M392.5 143V137.500H398" fill="none" stroke="#777" stroke-width="1"/><path d="M399 140V144H395Z" fill="#666"/><path d="M394.8 139.800L398 143" stroke="#666" stroke-width="1.100"/></svg>
<svg class="b" style="left:759px;top:136px" width="9" height="9" viewBox="759 136 9 9"><path d="M759.5 143V137.500H765" fill="none" stroke="#777" stroke-width="1"/><path d="M766 140V144H762Z" fill="#666"/><path d="M761.8 139.800L765 143" stroke="#666" stroke-width="1.100"/></svg>
<svg class="b" style="left:899px;top:136px" width="9" height="9" viewBox="899 136 9 9"><path d="M899.5 143V137.500H905" fill="none" stroke="#777" stroke-width="1"/><path d="M906 140V144H902Z" fill="#666"/><path d="M901.8 139.800L905 143" stroke="#666" stroke-width="1.100"/></svg>
<div class="b" style="left:119px;top:167px;width:2px;height:2px;background:#b0b0b0;"></div>
<div class="b" style="left:119px;top:171px;width:2px;height:2px;background:#b0b0b0;"></div>
<div class="b" style="left:119px;top:175px;width:2px;height:2px;background:#b0b0b0;"></div>
<svg class="b" style="left:146px;top:164px" width="54" height="16" viewBox="146 164 54 16">
<path d="M149 167.500L159 176.500M159 167.500L149 176.500" stroke="#c0c0c0" stroke-width="1.600"/>
<path d="M184.500 173L188.500 177L196.500 167.500" fill="none" stroke="#c6c6c6" stroke-width="2.300"/>
</svg>
<span class="t" style="left:220.500px;top:164px;font-size:15px;line-height:15px;color:#444;font-family:'Liberation Serif',serif;font-style:italic;">f<span style="font-size:10.500px;font-weight:700;position:relative;top:1px;left:-0.500px">x</span></span>
<svg class="b" style="left:1897px;top:165px" width="14" height="10" viewBox="1897 165 14 10"><path d="M1900.800 172.600L1904.300 169.100L1907.800 172.600" fill="none" stroke="#666" stroke-width="1.500"/></svg>
</body></html>
